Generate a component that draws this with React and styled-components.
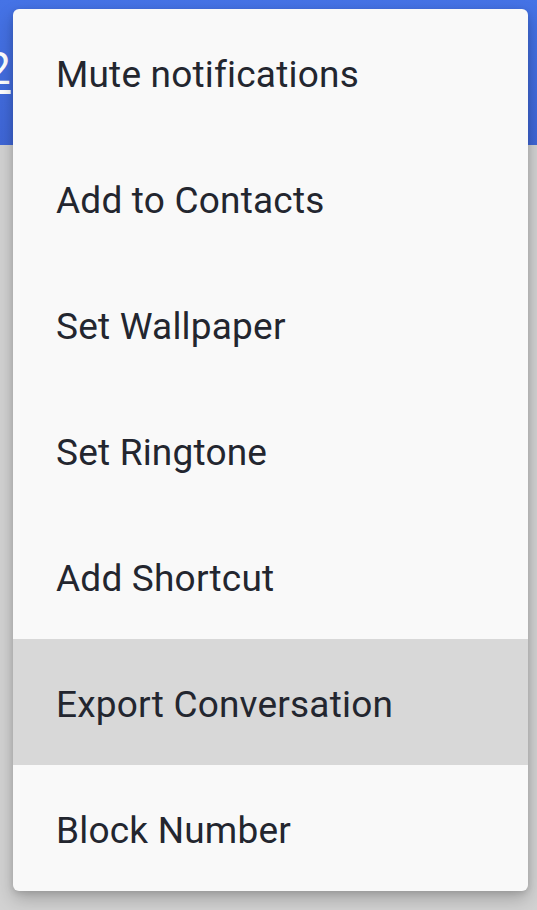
import React from 'react'
import styled, { createGlobalStyle } from 'styled-components'

const Global = createGlobalStyle`
    html, body {
        margin: 0;
        padding: 0;
        background: #d2d2d2;
        font-family: Roboto, "Noto Sans", sans-serif;
    }
`

const Screen = styled.div`
    position: relative;
    width: 537px;
    height: 910px;
    overflow: hidden;
    background: #d2d2d2;
`

const Header = styled.div`
    height: 145px;
    background: linear-gradient(180deg, #4573e6 0%, #3f66d6 100%);
    display: flex;
    align-items: flex-start;
    padding-top: 40px;
    box-sizing: border-box;
`

const Title = styled.span`
    margin-left: -14px;
    color: #ffffff;
    font-size: 44px;
    line-height: 58px;
    text-decoration: underline;
    text-decoration-thickness: 4px;
    text-underline-offset: 6px;
`

const Menu = styled.ul`
    position: absolute;
    top: 9px;
    left: 13px;
    width: 515px;
    margin: 0;
    padding: 0;
    list-style: none;
    background: #f9f9f9;
    border-radius: 6px;
    overflow: hidden;
    box-shadow: 0 8px 18px rgba(0, 0, 0, 0.22), 0 2px 6px rgba(0, 0, 0, 0.12);
`

const Item = styled.li`
    height: 126px;
    display: flex;
    align-items: center;
    padding: 4px 0 0 43px;
    box-sizing: border-box;
    font-size: 37px;
    letter-spacing: 0.2px;
    color: #23262f;
    background: ${({ active }) => (active ? '#d8d8d8' : 'transparent')};
`

const items = [
    'Mute notifications',
    'Add to Contacts',
    'Set Wallpaper',
    'Set Ringtone',
    'Add Shortcut',
    'Export Conversation',
    'Block Number',
]

export default function App () {
    return (
        <Screen>
            <Global />
            <Header>
                <Title>2</Title>
            </Header>
            <Menu>
                {items.map((label) => (
                    <Item key={label} active={label === 'Export Conversation'}>
                        {label}
                    </Item>
                ))}
            </Menu>
        </Screen>
    )
}
